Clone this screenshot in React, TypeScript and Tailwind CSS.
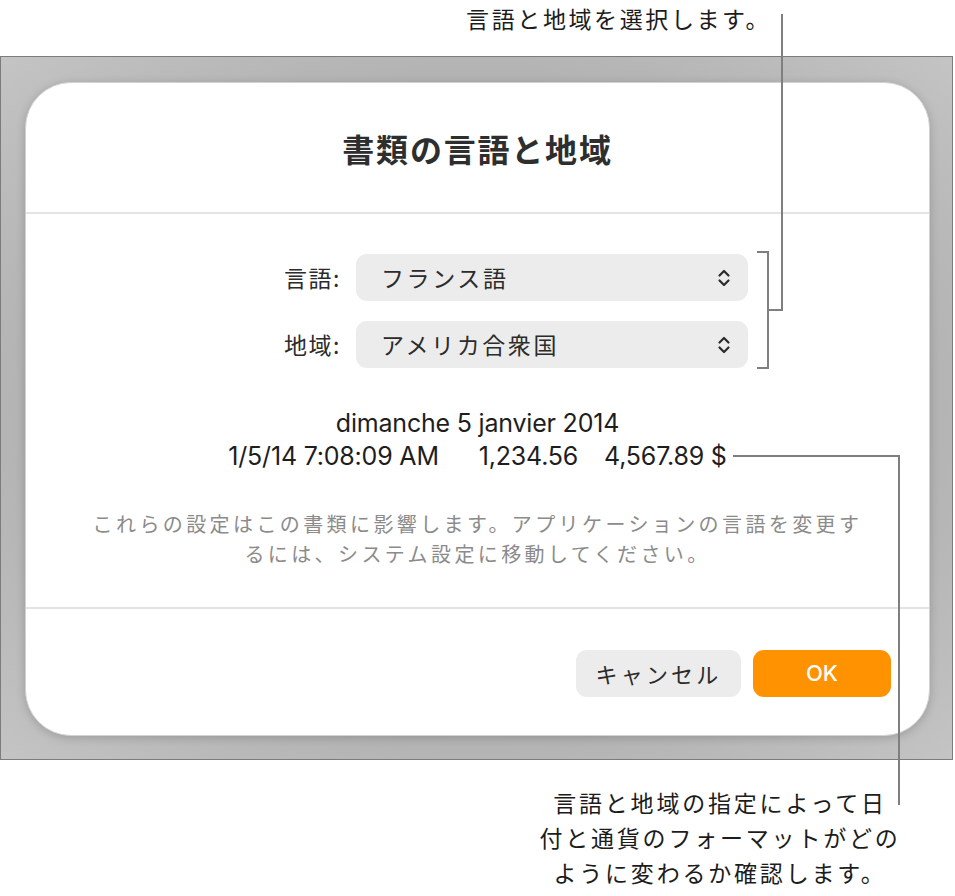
const jp = "font-['Noto_Sans_CJK_JP','Noto_Sans',sans-serif]";

function UpDown() {
  return (
    <svg width="14" height="20" viewBox="0 0 14 20" fill="none" stroke="#2b2b2b" strokeWidth="2.2" strokeLinecap="round" strokeLinejoin="round">
      <path d="M2.5 7.5 L7 3 L11.5 7.5" />
      <path d="M2.5 12.5 L7 17 L11.5 12.5" />
    </svg>
  );
}

type SelectRowProps = { label: string; value: string };
function SelectRow({ label, value }: SelectRowProps) {
  return (
    <div className="flex items-center">
      <span className="w-[84px] text-right text-[23px] tracking-[1.5px] text-[#2b2b2b]">{label}</span>
      <div className="ml-[15px] flex h-[47px] w-[392px] items-center justify-between rounded-[11px] bg-[#ececec] pr-[17px] pl-[25px]">
        <span className="text-[23px] tracking-[2.6px] text-[#2b2b2b]">{value}</span>
        <UpDown />
      </div>
    </div>
  );
}

export default function App() {
  return (
    <div className={`relative h-[896px] w-[955px] overflow-hidden bg-white ${jp}`}>
      <div className="flex h-[56px] justify-end pt-[3px] pr-[184px]">
        <span className="text-[23px] leading-[30px] tracking-[2.6px] text-[#1c1c1c]">言語と地域を選択します。</span>
      </div>

      <div className="h-[704px] w-[953px] border border-[#7c7c7c] bg-[#b3b3b3] bg-[radial-gradient(ellipse_at_center,#adadad_55%,#c4c4c4_100%)] pt-[25px] pr-[22px] pb-[23px] pl-[24px]">
        <div className="flex h-full flex-col rounded-[46px] border border-[#d2d2d2] bg-white shadow-[0_2px_10px_rgba(0,0,0,0.18)]">
          <div className="flex h-[129px] items-center justify-center">
            <h1 className="text-[32px] font-bold tracking-[1.8px] text-[#2e2e2e]">書類の言語と地域</h1>
          </div>
          <div className="h-[2px] bg-[#e4e4e4]" />

          <div className="flex flex-col gap-[20px] pt-[40px] pl-[231px]">
            <SelectRow label="言語:" value="フランス語" />
            <SelectRow label="地域:" value="アメリカ合衆国" />
          </div>

          <div className="mt-[39px] flex flex-col items-center font-['Inter',sans-serif] text-[25px] leading-[33px] tracking-[-0.2px] text-[#1e1e1e]">
            <span>dimanche 5 janvier 2014</span>
            <div className="flex">
              <span>1/5/14 7:08:09 AM</span>
              <span className="ml-[40px]">1,234.56</span>
              <span className="ml-[26px]">4,567.89 $</span>
            </div>
          </div>

          <p className="mt-[36px] text-center text-[20px] leading-[30px] tracking-[3.4px] text-[#8b8b8b]">
            これらの設定はこの書類に影響します。アプリケーションの言語を変更す
            <br />
            るには、システム設定に移動してください。
          </p>

          <div className="mt-[38px] h-[2px] bg-[#e4e4e4]" />

          <div className="flex justify-end gap-[12px] pt-[41px] pr-[38px]">
            <button className="h-[47px] w-[165px] rounded-[11px] bg-[#ececec] text-[22px] tracking-[3.2px] text-[#2b2b2b]">
              キャンセル
            </button>
            <button className="h-[47px] w-[138px] rounded-[11px] bg-[#ff9200] font-['Inter',sans-serif] text-[22px] font-medium text-white">
              OK
            </button>
          </div>
        </div>
      </div>

      <div className="pt-[25px] pl-[520px]">
        <p className="w-[400px] text-center text-[23px] leading-[35px] tracking-[2.8px] whitespace-nowrap text-[#1c1c1c]">
          言語と地域の指定によって日
          <br />
          付と通貨のフォーマットがどの
          <br />
          ように変わるか確認します。
        </p>
      </div>

      <svg className="pointer-events-none absolute inset-0" width="955" height="896" fill="none" stroke="#7f7f7f" strokeWidth="2">
        <path d="M782 14 V310 H768" />
        <path d="M757 252 H768 V368 H757" />
        <path d="M733 456 H899 V805" />
      </svg>
    </div>
  );
}
